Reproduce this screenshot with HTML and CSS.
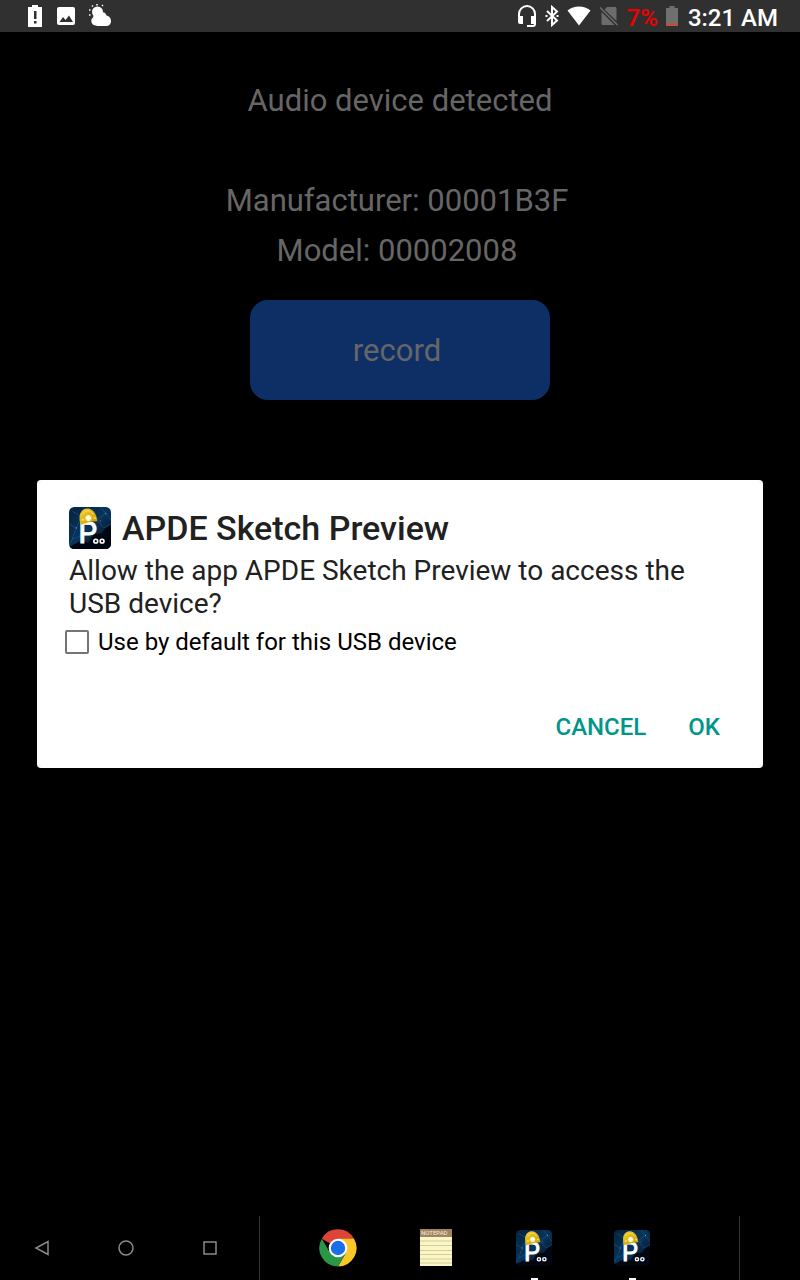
FILE: index.html
```html
<!DOCTYPE html>
<html lang="en">
<head>
    <meta charset="utf-8">
    <meta name="viewport" content="width=device-width, initial-scale=1">
    <title>APDE Sketch Preview</title>
    <link rel="stylesheet" href="styles.css">
</head>
<body>
    <svg class="sprite" aria-hidden="true">
        <defs>
            <linearGradient id="nightSky" x1="0" y1="0" x2="1" y2="1">
                <stop offset="0" stop-color="#052440"/>
                <stop offset="0.5" stop-color="#07345b"/>
                <stop offset="1" stop-color="#010a14"/>
            </linearGradient>
            <linearGradient id="helmet" x1="0" y1="0" x2="1" y2="1">
                <stop offset="0" stop-color="#f3cf2b"/>
                <stop offset="1" stop-color="#c99a08"/>
            </linearGradient>
            <clipPath id="tile"><rect width="40" height="40" rx="5"/></clipPath>
            <symbol id="apdeLogo" viewBox="0 0 40 40">
                <g clip-path="url(#tile)">
                    <rect width="40" height="40" fill="url(#nightSky)"/>
                    <path d="M0 38 12 32 18 34 24 26 31 25 35 20 40 17V40H0z" fill="#000712"/>
                    <path d="M0 16 7 20 12 9 3 4M7 20 3 31 14 26M12 9 20 0M27 12 35 6 40 13M35 6 30 0M27 12 33 20 40 16M3 31 0 36" fill="none" stroke="#4f7da1" stroke-width="0.6" opacity="0.5"/>
                    <circle cx="7" cy="20" r="0.6" fill="#7f9fb8"/>
                    <circle cx="35" cy="6" r="0.6" fill="#7f9fb8"/>
                    <circle cx="30" cy="13" r="0.5" fill="#7f9fb8"/>
                </g>
                <text class="logo-letter" x="9" y="34">P</text>
                <path d="M11.500 17C8 9 11 1.500 17.500 1.500c5 0 9 5 9.500 12C22 13.500 16 15 11.500 17z" fill="url(#helmet)"/>
                <path d="M13 7c2-4 7-5 10 0" fill="none" stroke="#fbe774" stroke-width="0.8"/>
                <path d="M12 12h2.500M23.500 10.500h2" stroke="#f9df58" stroke-width="1.500"/>
                <circle cx="18.500" cy="10.500" r="3" fill="#f8e47b"/>
                <path d="M18.500 8v5M16 10.500h5" stroke="#fff" stroke-width="2"/>
                <circle cx="25.500" cy="32.500" r="1.800" fill="none" stroke="#fff" stroke-width="1.600"/>
                <circle cx="31.500" cy="32.500" r="1.800" fill="none" stroke="#fff" stroke-width="1.600"/>
            </symbol>
        </defs>
    </svg>

    <header class="status-bar">
        <div class="notifications">
            <svg width="16" height="22" viewBox="0 0 16 22">
                <path d="M5 0h6v2h4v20H1V2h4z" fill="#fff"/>
                <path d="M7 6h2.500v8H7zM7 16h2.500v2.500H7z" fill="#303030"/>
            </svg>
            <svg width="18" height="18" viewBox="0 0 18 18">
                <rect width="18" height="18" rx="2" fill="#fff"/>
                <path d="M2.500 15 6 10l2.500 3L12 8.500l4 6.500z" fill="#303030"/>
            </svg>
            <svg width="24" height="24" viewBox="0 0 24 24">
                <circle cx="8.500" cy="8" r="5.500" fill="#fff"/>
                <path d="M7 21.500a4.500 4.500 0 0 1-3-8C5 9 9 8 12 8c3 0 5 1 5.500 3.500 3 .5 4.500 3 4.500 5.500 0 3-2 5-5 5H8z" fill="#fff"/>
                <path d="M0 11h1.500M0 6h1.500M3 1.500l1 1M8 0v1.500M13 2l1-1" stroke="#fff" stroke-width="1.500"/>
            </svg>
        </div>
        <div class="indicators">
            <svg width="20" height="22" viewBox="0 0 20 22">
                <path d="M2 12V9a8 8 0 0 1 16 0v10c0 1-.5 2-2 2h-6" fill="none" stroke="#fff" stroke-width="2"/>
                <path d="M1 11h5v8H3c-1 0-2-1-2-2zM14 11h5v8h-5z" fill="#fff"/>
            </svg>
            <svg width="14" height="22" viewBox="0 0 14 22">
                <path d="M2 6l10 9.500-5 4.500V2l5 4.500L2 16M.5 11h2M11.500 11h2" fill="none" stroke="#fff" stroke-width="2"/>
            </svg>
            <svg width="24" height="20" viewBox="0 0 24 20">
                <path d="M12 19.500.5 4.500C7-1 17-1 23.500 4.500z" fill="#fff"/>
            </svg>
            <svg width="20" height="20" viewBox="0 0 20 20">
                <path d="M8 1h8c1 0 1.500.5 1.500 1.500V15L5.500 3.500zM2.500 6 15.500 19H4c-1 0-1.500-.5-1.500-1.500z" fill="#6c6c6c"/>
                <path d="M1 1.500 18.500 19" stroke="#6c6c6c" stroke-width="1.600"/>
            </svg>
            <span class="battery-level">7%</span>
            <svg width="12" height="20" viewBox="0 0 12 20">
                <path d="M3.500 0h5v2H12v18H0V2h3.500z" fill="#707070"/>
                <path d="M0 17.500h12V20H0z" fill="#bd5134"/>
            </svg>
            <time class="clock">3:21 AM</time>
        </div>
    </header>

    <main class="sketch">
        <p class="sketch-status">Audio device detected</p>
        <p class="sketch-line">Manufacturer: 00001B3F</p>
        <p class="sketch-line">Model: 00002008</p>
        <button class="record-btn" type="button">record</button>
    </main>

    <div class="dialog-layer">
        <form class="dialog" role="dialog" aria-labelledby="dialogTitle">
            <div class="dialog-header">
                <svg class="dialog-icon" aria-hidden="true"><use href="#apdeLogo"/></svg>
                <h1 id="dialogTitle">APDE Sketch Preview</h1>
            </div>
            <p class="dialog-message">Allow the app APDE Sketch Preview to access the USB device?</p>
            <div class="dialog-option">
                <input type="checkbox" id="useDefault">
                <label for="useDefault">Use by default for this USB device</label>
            </div>
            <div class="dialog-actions">
                <button type="button">CANCEL</button>
                <button type="button">OK</button>
            </div>
        </form>
    </div>

    <nav class="nav-bar">
        <div class="nav-keys">
            <button type="button" aria-label="Back">
                <svg width="16" height="16" viewBox="0 0 16 16"><path d="M14 1.500v13L2 8z"/></svg>
            </button>
            <button type="button" aria-label="Home">
                <svg width="16" height="16" viewBox="0 0 16 16"><circle cx="8" cy="8" r="7"/></svg>
            </button>
            <button type="button" aria-label="Recent apps">
                <svg width="16" height="16" viewBox="0 0 16 16"><rect x="2" y="2" width="12" height="12"/></svg>
            </button>
        </div>
        <div class="nav-apps">
            <button type="button" aria-label="Chrome">
                <svg width="38" height="38" viewBox="0 0 38 38">
                    <path d="M19 19 2.800 9.700A18.500 18.500 0 0 1 35 9.700z" fill="#db4437"/>
                    <path d="M19 9.700h16A18.500 18.500 0 0 1 19 37.500l8-13.800z" fill="#fbc628"/>
                    <path d="M11 23.700 2.800 9.700A18.500 18.500 0 0 0 19 37.500l8-13.800z" fill="#2a9747"/>
                    <circle cx="19" cy="19" r="9.300" fill="#fff"/>
                    <circle cx="19" cy="19" r="7.200" fill="#1a6fe8"/>
                </svg>
            </button>
            <button type="button" aria-label="Notepad">
                <svg width="34" height="38" viewBox="0 0 34 38">
                    <rect x="1" width="32" height="37" fill="#fbf7c5"/>
                    <rect x="1" width="32" height="8" fill="#a18562"/>
                    <path d="M1 12h32M1 16.500h32M1 21.500h32M1 25.500h32M1 30h32M1 34h32" stroke="#d5cd9b"/>
                    <text class="notepad-title" x="2" y="6">NOTEPAD</text>
                </svg>
            </button>
            <button class="running" type="button" aria-label="APDE Sketch Preview">
                <svg class="app-icon"><use href="#apdeLogo"/></svg>
            </button>
            <button class="running" type="button" aria-label="APDE Sketch Preview, second window">
                <svg class="app-icon"><use href="#apdeLogo"/></svg>
            </button>
        </div>
    </nav>
</body>
</html>
```
FILE: styles.css
```css
:root {
    --bar-color: #303030;
    --dim-text: #666666;
    --record-color: #0e2f66;
    --accent-color: #009688;
    --status-height: 32px;
    --nav-height: 64px;
}

* {
    box-sizing: border-box;
    margin: 0;
    padding: 0;
}

body {
    display: flex;
    flex-direction: column;
    min-height: 100vh;
    font-family: Roboto, "Liberation Sans", sans-serif;
    background: #000;
}

button {
    font-family: inherit;
    border: none;
    background: none;
    cursor: pointer;
}

svg {
    display: block;
}

.sprite {
    position: absolute;
    width: 0;
    height: 0;
}

.logo-letter {
    font-size: 28px;
    fill: #fff;
    stroke: #fff;
    stroke-width: 1;
}

/* Status bar */
.status-bar {
    display: flex;
    justify-content: space-between;
    height: var(--status-height);
    padding: 0 22px 0 27px;
    background: var(--bar-color);
    color: #fff;
}

.notifications,
.indicators {
    display: flex;
    align-items: center;
}

.notifications {
    gap: 14px;
}

.indicators {
    gap: 8px;
    font-size: 24px;
    font-weight: 500;
    line-height: 28px;
}

.battery-level,
.clock {
    padding-top: 4px;
}

.battery-level {
    color: #ee0000;
}

.clock {
    margin-left: 2px;
}

/* Sketch output */
.sketch {
    flex: 1;
    display: flex;
    flex-direction: column;
    align-items: center;
    padding-top: 44px;
    font-size: 31px;
    line-height: 50px;
    color: var(--dim-text);
}

.sketch-status {
    margin-bottom: 50px;
}

.sketch-line {
    padding-right: 6px;
}

.record-btn {
    width: 300px;
    height: 100px;
    margin-top: 24px;
    padding-right: 6px;
    border-radius: 18px;
    font-size: 31px;
    color: var(--dim-text);
    background: var(--record-color);
}

/* Permission dialog */
.dialog-layer {
    position: fixed;
    inset: var(--status-height) 0 var(--nav-height);
    display: flex;
    align-items: center;
    padding: 0 37px;
}

.dialog {
    width: 100%;
    padding: 26px 32px 17px;
    border-radius: 4px;
    background: #fff;
    color: #212121;
}

.dialog-header {
    display: flex;
    align-items: center;
    gap: 11px;
}

.dialog-icon {
    width: 42px;
    height: 42px;
}

.dialog-header h1 {
    font-size: 34px;
    font-weight: 500;
    line-height: 44px;
}

.dialog-message {
    margin-top: 4px;
    font-size: 28px;
    line-height: 33px;
}

.dialog-option {
    display: flex;
    align-items: center;
    gap: 9px;
    margin: 4px 0 0 -4px;
    font-size: 24px;
    line-height: 36px;
    color: #000;
}

.dialog-option input {
    appearance: none;
    width: 24px;
    height: 24px;
    border: 2px solid #757575;
    border-radius: 2px;
}

.dialog-option input:checked {
    background: var(--accent-color);
}

.dialog-actions {
    display: flex;
    justify-content: flex-end;
    gap: 20px;
    margin-top: 43px;
}

.dialog-actions button {
    padding: 0 11px;
    font-size: 24px;
    font-weight: 500;
    line-height: 48px;
    color: var(--accent-color);
}

/* Navigation bar */
.nav-bar {
    display: flex;
    height: var(--nav-height);
    padding-right: 60px;
}

.nav-keys {
    display: flex;
    width: 260px;
    padding-right: 7px;
    border-right: 1px solid #333;
}

.nav-keys button {
    display: flex;
    flex: 1;
    align-items: center;
    justify-content: center;
}

.nav-keys svg {
    fill: none;
    stroke: #8a8a8a;
    stroke-width: 1.5;
}

.nav-apps {
    flex: 1;
    display: flex;
    align-items: center;
    justify-content: center;
    gap: 34px;
    padding-right: 29px;
    border-right: 1px solid #333;
}

.nav-apps button {
    position: relative;
    display: flex;
    align-items: center;
    justify-content: center;
    width: 64px;
    height: 64px;
}

.app-icon {
    width: 36px;
    height: 36px;
}

.running::after {
    content: "";
    position: absolute;
    bottom: 0;
    width: 7px;
    height: 2px;
    background: #fff;
}

.notepad-title {
    font-size: 6px;
    fill: #f4eddc;
}
```
